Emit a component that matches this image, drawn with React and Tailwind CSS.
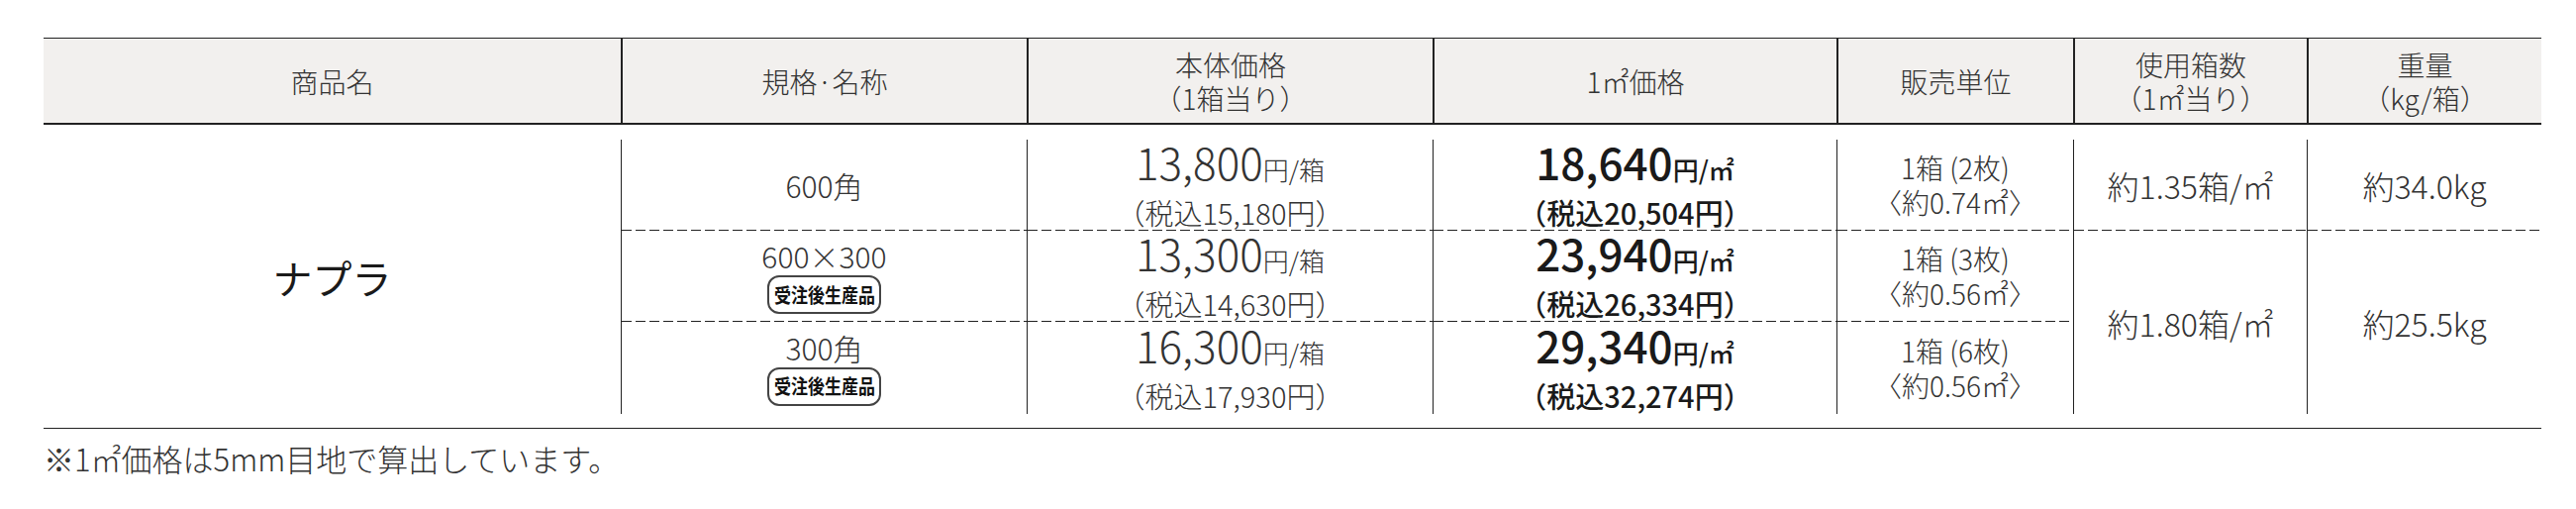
import React from "react";

const COLS = "grid grid-cols-[583px_410px_410px_408px_239px_236px_237px]";
const DASH =
  "bg-[image:repeating-linear-gradient(to_right,#222_0_10px,transparent_10px_14px)] bg-[length:100%_1px] bg-bottom bg-no-repeat";

function HeadCell({ first, lines }) {
  return (
    <div
      className={
        "flex flex-col items-center justify-center " +
        (first ? "" : "border-l-2 border-[#222]")
      }
    >
      {lines.map((l, i) => (
        <span key={i}>{l}</span>
      ))}
    </div>
  );
}

function Badge() {
  return (
    <span className="flex h-[39px] w-[115px] items-center justify-center rounded-[12px] border-2 border-[#444] bg-white">
      <span className="inline-block scale-x-[0.85] text-[20px] font-bold leading-none text-[#111] whitespace-nowrap">
        受注後生産品
      </span>
    </span>
  );
}

function SizeCell({ name, badge, dashed }) {
  return (
    <div
      className={
        "flex flex-col items-center justify-center gap-[3px] border-l border-[#222] text-[30px] leading-[34px] text-[#333] font-light " +
        (dashed ? DASH : "")
      }
    >
      <span>{name}</span>
      {badge && <Badge />}
    </div>
  );
}

function PriceCell({ price, unit, tax, dashed, strong }) {
  return (
    <div
      className={
        "flex flex-col items-center justify-center border-l border-[#222] " +
        (strong ? "text-[#1a1a1a] font-medium " : "text-[#333] font-light ") +
        (dashed ? DASH : "")
      }
    >
      <span className="leading-[42px] whitespace-nowrap">
        <span className="text-[44px]">{price}</span>
        <span className="text-[26px]">{unit}</span>
      </span>
      <span className="text-[29px] leading-[36px] whitespace-nowrap">{tax}</span>
    </div>
  );
}

function UnitCell({ a, b, dashed }) {
  return (
    <div
      className={
        "flex flex-col items-center justify-center border-l border-[#222] text-[28px] leading-[35px] text-[#333] font-light " +
        (dashed ? DASH : "")
      }
    >
      <span className="whitespace-nowrap">{a}</span>
      <span className="whitespace-nowrap">{b}</span>
    </div>
  );
}

function PlainCell({ text, dashed, span }) {
  return (
    <div
      className={
        "flex items-center justify-center border-l border-[#222] text-[32px] leading-[40px] text-[#333] font-light " +
        (span ? "row-span-2 " : "") +
        (dashed ? DASH : "")
      }
    >
      <span className="whitespace-nowrap">{text}</span>
    </div>
  );
}

export default function App() {
  return (
    <div className="min-h-[514px] w-[2602px] bg-white pl-[44px] pt-[38px] font-['Noto_Sans_CJK_JP','Noto_Sans',sans-serif]">
      <div className="w-[2523px]">
        {/* header */}
        <div
          className={
            COLS +
            " h-[88px] border-t border-b-2 border-[#222] bg-[#f2f0ee] text-[28px] leading-[34px] text-[#333] font-light"
          }
        >
          <HeadCell first lines={["商品名"]} />
          <HeadCell lines={["規格·名称"]} />
          <HeadCell lines={["本体価格", "（1箱当り）"]} />
          <HeadCell lines={["1㎡価格"]} />
          <HeadCell lines={["販売単位"]} />
          <HeadCell lines={["使用箱数", "（1㎡当り）"]} />
          <HeadCell lines={["重量", "（kg/箱）"]} />
        </div>

        {/* body */}
        <div
          className={
            COLS +
            " grid-rows-[92px_92px_93px] pt-[15px] pb-[14px] border-b border-[#222]"
          }
        >
          <div className="row-span-3 flex items-center justify-center text-[40px] leading-[44px] text-[#1a1a1a]">
            ナプラ
          </div>

          {/* row 1 */}
          <SizeCell name="600角" dashed />
          <PriceCell price="13,800" unit="円/箱" tax="（税込15,180円）" dashed />
          <PriceCell strong price="18,640" unit="円/㎡" tax="（税込20,504円）" dashed />
          <UnitCell a="1箱 (2枚)" b="〈約0.74㎡〉" dashed />
          <PlainCell text="約1.35箱/㎡" dashed />
          <PlainCell text="約34.0kg" dashed />

          {/* row 2 */}
          <SizeCell name="600×300" badge dashed />
          <PriceCell price="13,300" unit="円/箱" tax="（税込14,630円）" dashed />
          <PriceCell strong price="23,940" unit="円/㎡" tax="（税込26,334円）" dashed />
          <UnitCell a="1箱 (3枚)" b="〈約0.56㎡〉" dashed />
          <PlainCell text="約1.80箱/㎡" span />
          <PlainCell text="約25.5kg" span />

          {/* row 3 */}
          <SizeCell name="300角" badge />
          <PriceCell price="16,300" unit="円/箱" tax="（税込17,930円）" />
          <PriceCell strong price="29,340" unit="円/㎡" tax="（税込32,274円）" />
          <UnitCell a="1箱 (6枚)" b="〈約0.56㎡〉" />
        </div>

        <p className="mt-[14px] text-[31px] leading-[32px] text-[#333] font-light">
          ※1㎡価格は5mm目地で算出しています。
        </p>
      </div>
    </div>
  );
}
